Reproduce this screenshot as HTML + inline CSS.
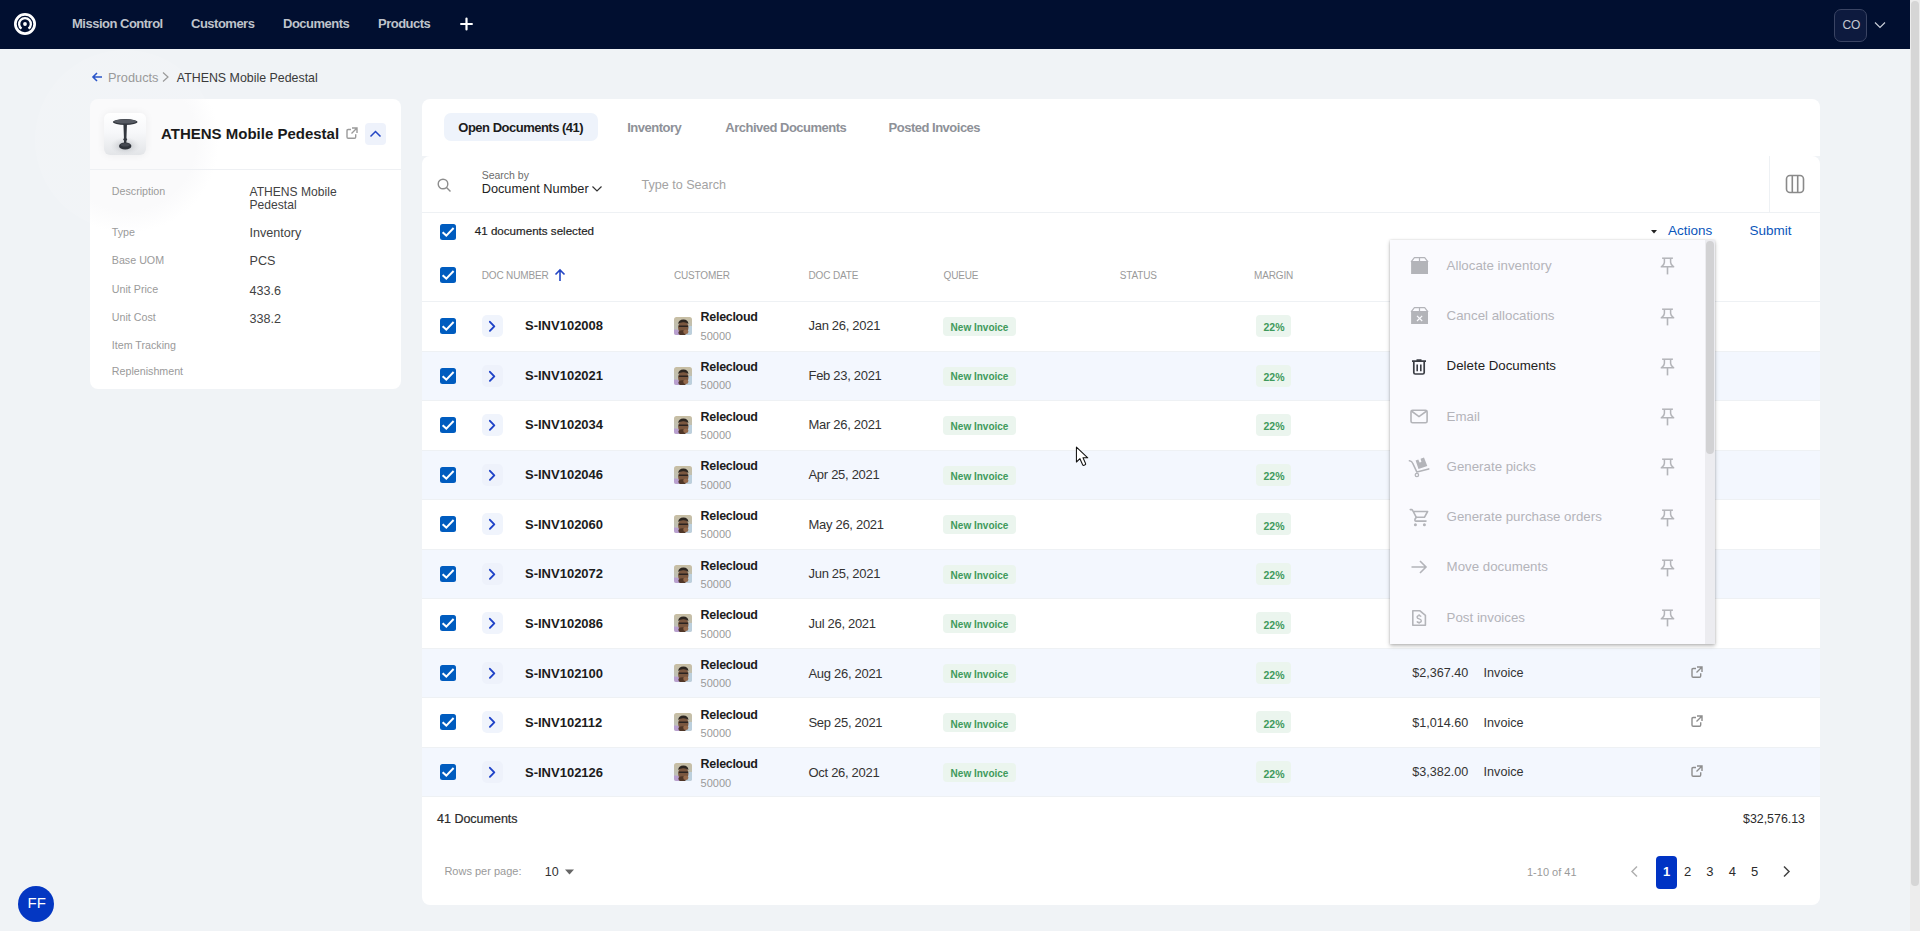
<!DOCTYPE html>
<html><head><meta charset="utf-8"><title>ATHENS Mobile Pedestal</title>
<style>
html,body{margin:0;padding:0;}
body{width:1920px;height:931px;overflow:hidden;position:relative;background:#f0f3f6;font-family:"Liberation Sans",sans-serif;}
.t{position:absolute;white-space:nowrap;}
svg{display:block;}
</style></head><body>
<div style="position:absolute;left:35px;top:50px;width:180px;height:180px;border-radius:50%;background:radial-gradient(circle at 50% 50%, rgba(252,253,253,0.12) 0, rgba(252,253,253,0.12) 70%, rgba(252,253,253,0) 100%);"></div>
<div style="position:absolute;left:0px;top:0px;width:1910px;height:49px;background:#010f30;"></div>
<svg style="position:absolute;left:10px;top:9px;" width="30" height="30" viewBox="0 0 30 30"><circle cx="15" cy="15" r="9.65" fill="none" stroke="#fff" stroke-width="2.7"/><path d="M11.5 19.7 A5.85 5.85 0 1 1 18.5 19.7" fill="none" stroke="#fff" stroke-width="2.3"/><circle cx="15" cy="15" r="1.9" fill="#fff"/></svg>
<div class="t" style="left:72px;top:16.75px;font-size:13px;line-height:13px;color:#bfc3cb;font-weight:700;letter-spacing:-0.5px;">Mission Control</div>
<div class="t" style="left:191px;top:16.75px;font-size:13px;line-height:13px;color:#bfc3cb;font-weight:700;letter-spacing:-0.5px;">Customers</div>
<div class="t" style="left:283px;top:16.75px;font-size:13px;line-height:13px;color:#bfc3cb;font-weight:700;letter-spacing:-0.5px;">Documents</div>
<div class="t" style="left:378px;top:16.75px;font-size:13px;line-height:13px;color:#bfc3cb;font-weight:700;letter-spacing:-0.5px;">Products</div>
<svg style="position:absolute;left:456px;top:14px;" width="20" height="20" viewBox="0 0 20 20"><path d="M5.1 10 H15.9 M10.5 4.6 V15.4" stroke="#fff" stroke-width="2.2" stroke-linecap="round"/></svg>
<div style="position:absolute;left:1834px;top:9px;width:33px;height:33px;box-sizing:border-box;border:1px solid #3a4463;border-radius:7px;background:#0d1a3e;"></div>
<div class="t" style="left:1842.4px;top:18.74px;font-size:12px;line-height:12px;color:#c4c8d2;font-weight:400;">CO</div>
<svg style="position:absolute;left:1874px;top:20.8px;" width="12" height="8" viewBox="0 0 12 8"><path d="M1 1.5 L6 6.5 L11 1.5" fill="none" stroke="#c9ced8" stroke-width="1.2"/></svg>
<div style="position:absolute;left:1910px;top:0px;width:10px;height:931px;background:#ededed;"></div>
<div style="position:absolute;left:1911px;top:1px;width:8px;height:885px;background:#d6d6d6;border-radius:4px;"></div>
<svg style="position:absolute;left:91px;top:71px;" width="12" height="12" viewBox="0 0 12 12"><path d="M11 6 H2 M6 2 L2 6 L6 10" fill="none" stroke="#2a55c9" stroke-width="1.6"/></svg>
<div class="t" style="left:108px;top:71.86px;font-size:12.8px;line-height:12.8px;color:#9a9a9a;font-weight:400;">Products</div>
<svg style="position:absolute;left:161px;top:71px;" width="9" height="12" viewBox="0 0 9 12"><path d="M2 1.5 L7 6 L2 10.5" fill="none" stroke="#9a9a9a" stroke-width="1.2"/></svg>
<div class="t" style="left:176.8px;top:72.00px;font-size:12.4px;line-height:12.4px;color:#3a3a3a;font-weight:400;">ATHENS Mobile Pedestal</div>
<div style="position:absolute;left:90px;top:99px;width:311px;height:290px;background:radial-gradient(circle 92px at 37px 42px, rgba(250,250,251,1) 0, rgba(250,250,251,1) 75%, rgba(255,255,255,1) 100%);border-radius:8px;"></div>
<div style="position:absolute;left:90px;top:169px;width:311px;height:1px;background:#eef0f3;"></div>
<div style="position:absolute;left:104px;top:113px;width:42px;height:42px;border-radius:6px;background:linear-gradient(180deg,#ffffff 0%,#f7f8fa 45%,#e3e5e8 100%);box-shadow:0 0 8px rgba(0,0,0,0.06);"></div>
<svg style="position:absolute;left:104px;top:113px;" width="42" height="42" viewBox="0 0 42 42"><defs><radialGradient id="sh" cx="0.5" cy="0.5" r="0.5"><stop offset="0" stop-color="#a9adb3" stop-opacity="0.9"/><stop offset="1" stop-color="#d8dadd" stop-opacity="0"/></radialGradient></defs><ellipse cx="21.2" cy="33" rx="15" ry="9" fill="url(#sh)"/><ellipse cx="21.2" cy="9" rx="12.3" ry="2.9" fill="#2f333a"/><ellipse cx="21.2" cy="8.4" rx="11.2" ry="2.1" fill="#575b63"/><path d="M19.4 11 L23 11 L22.6 21 Q22.4 25 22.5 26 L19.9 26 Q20 25 19.8 21 Z" fill="#33373e"/><ellipse cx="21.2" cy="26.6" rx="1.9" ry="1.3" fill="#33373e"/><rect x="20" y="27" width="2.4" height="3.5" fill="#33373e"/><ellipse cx="21.2" cy="33" rx="6.2" ry="3.6" fill="#2f333a"/><ellipse cx="21.2" cy="31.8" rx="4.5" ry="1.8" fill="#454951"/></svg>
<div class="t" style="left:161px;top:125.80px;font-size:15px;line-height:15px;color:#1a1a1a;font-weight:700;">ATHENS Mobile Pedestal</div>
<svg style="position:absolute;left:346px;top:127px;" width="12" height="12" viewBox="0 0 12 12"><path d="M5 2.5 H2.2 Q1 2.5 1 3.7 V10 Q1 11.2 2.2 11.2 H8.5 Q9.7 11.2 9.7 10 V7.2" fill="none" stroke="#9b9b9b" stroke-width="1.4"/><path d="M6 1 H11 V6 M11 1 L5.5 6.5" fill="none" stroke="#9b9b9b" stroke-width="1.4"/></svg>
<div style="position:absolute;left:365px;top:123px;width:21px;height:22px;background:#eef2fb;border-radius:4px;"></div>
<svg style="position:absolute;left:369px;top:128px;" width="13" height="12" viewBox="0 0 13 12"><path d="M1.5 8.5 L6.5 3.5 L11.5 8.5" fill="none" stroke="#2446c4" stroke-width="1.5"/></svg>
<div class="t" style="left:111.8px;top:186.04px;font-size:10.7px;line-height:10.7px;color:#9a9a9a;font-weight:400;">Description</div>
<div class="t" style="left:249.5px;top:185.76px;font-size:12.1px;line-height:12.1px;color:#424242;font-weight:400;">ATHENS Mobile</div>
<div class="t" style="left:249.5px;top:198.66px;font-size:12.1px;line-height:12.1px;color:#424242;font-weight:400;">Pedestal</div>
<div class="t" style="left:111.8px;top:226.94px;font-size:10.7px;line-height:10.7px;color:#9a9a9a;font-weight:400;">Type</div>
<div class="t" style="left:249.5px;top:227.33px;font-size:12.6px;line-height:12.6px;color:#424242;font-weight:400;">Inventory</div>
<div class="t" style="left:111.8px;top:254.94px;font-size:10.7px;line-height:10.7px;color:#9a9a9a;font-weight:400;">Base UOM</div>
<div class="t" style="left:249.5px;top:255.33px;font-size:12.6px;line-height:12.6px;color:#424242;font-weight:400;">PCS</div>
<div class="t" style="left:111.8px;top:283.94px;font-size:10.7px;line-height:10.7px;color:#9a9a9a;font-weight:400;">Unit Price</div>
<div class="t" style="left:249.5px;top:285.13px;font-size:12.6px;line-height:12.6px;color:#424242;font-weight:400;">433.6</div>
<div class="t" style="left:111.8px;top:311.84px;font-size:10.7px;line-height:10.7px;color:#9a9a9a;font-weight:400;">Unit Cost</div>
<div class="t" style="left:249.5px;top:312.73px;font-size:12.6px;line-height:12.6px;color:#424242;font-weight:400;">338.2</div>
<div class="t" style="left:111.8px;top:339.84px;font-size:10.7px;line-height:10.7px;color:#9a9a9a;font-weight:400;">Item Tracking</div>
<div class="t" style="left:111.8px;top:365.84px;font-size:10.7px;line-height:10.7px;color:#9a9a9a;font-weight:400;">Replenishment</div>
<div style="position:absolute;left:422px;top:99px;width:1398px;height:57px;background:#fff;border-radius:8px 8px 0 0;"></div>
<div style="position:absolute;left:422px;top:156px;width:1398px;height:749px;background:#fff;border-radius:8px;"></div>
<div style="position:absolute;left:444px;top:113px;width:154px;height:28px;background:#eef3fb;border-radius:7px;"></div>
<div class="t" style="left:458.3px;top:121.20px;font-size:13px;line-height:13px;color:#1c1c1c;font-weight:700;letter-spacing:-0.5px;">Open Documents (41)</div>
<div class="t" style="left:627.2px;top:121.20px;font-size:13px;line-height:13px;color:#8e9198;font-weight:700;letter-spacing:-0.5px;">Inventory</div>
<div class="t" style="left:725.3px;top:121.20px;font-size:13px;line-height:13px;color:#8e9198;font-weight:700;letter-spacing:-0.5px;">Archived Documents</div>
<div class="t" style="left:888.6px;top:121.20px;font-size:13px;line-height:13px;color:#8e9198;font-weight:700;letter-spacing:-0.5px;">Posted Invoices</div>
<svg style="position:absolute;left:437px;top:178px;" width="15" height="15" viewBox="0 0 15 15"><circle cx="6" cy="6" r="4.8" fill="none" stroke="#8d8d8d" stroke-width="1.4"/><path d="M9.5 9.5 L13.5 13.5" stroke="#8d8d8d" stroke-width="1.5"/></svg>
<div class="t" style="left:481.7px;top:169.61px;font-size:10.5px;line-height:10.5px;color:#6b6b6b;font-weight:400;">Search by</div>
<div class="t" style="left:481.7px;top:183.21px;font-size:12.75px;line-height:12.75px;color:#222;font-weight:400;">Document Number</div>
<svg style="position:absolute;left:591px;top:185px;" width="12" height="8" viewBox="0 0 12 8"><path d="M1.5 1.5 L6 6 L10.5 1.5" fill="none" stroke="#333" stroke-width="1.2"/></svg>
<div class="t" style="left:641.4px;top:178.63px;font-size:12.6px;line-height:12.6px;color:#a3a3a3;font-weight:400;">Type to Search</div>
<div style="position:absolute;left:1769px;top:156px;width:1px;height:56px;background:#eef1f4;"></div>
<svg style="position:absolute;left:1785px;top:174px;" width="20" height="20" viewBox="0 0 20 20"><rect x="1.5" y="1.5" width="17" height="17" rx="3.5" fill="none" stroke="#8a8a8a" stroke-width="1.6"/><path d="M7.3 2 V18 M12.7 2 V18" stroke="#8a8a8a" stroke-width="1.6"/></svg>
<div style="position:absolute;left:422px;top:212px;width:1398px;height:1px;background:#eef1f4;"></div>
<svg style="position:absolute;left:440px;top:223.5px;" width="16" height="16" viewBox="0 0 16 16"><rect x="0" y="0" width="16" height="16" rx="2.5" fill="#005cbf"/><path d="M2.6 8.2 L6.3 11.6 L13.6 4" fill="none" stroke="#fff" stroke-width="2"/></svg>
<div class="t" style="left:474.8px;top:225.18px;font-size:11.6px;line-height:11.6px;color:#1f1f1f;font-weight:400;-webkit-text-stroke:0.2px #1f1f1f;">41 documents selected</div>
<svg style="position:absolute;left:1649px;top:228px;" width="10" height="7" viewBox="0 0 10 7"><path d="M2 2 H8 L5 5.5 Z" fill="#222"/></svg>
<div class="t" style="left:1668px;top:223.77px;font-size:13.5px;line-height:13.5px;color:#0b56bb;font-weight:400;">Actions</div>
<div class="t" style="left:1749.4px;top:223.77px;font-size:13.5px;line-height:13.5px;color:#0b56bb;font-weight:400;">Submit</div>
<svg style="position:absolute;left:440px;top:267px;" width="16" height="16" viewBox="0 0 16 16"><rect x="0" y="0" width="16" height="16" rx="2.5" fill="#005cbf"/><path d="M2.6 8.2 L6.3 11.6 L13.6 4" fill="none" stroke="#fff" stroke-width="2"/></svg>
<div class="t" style="left:481.7px;top:270.84px;font-size:10px;line-height:10px;color:#9a9a9a;font-weight:400;letter-spacing:-0.15px;">DOC NUMBER</div>
<svg style="position:absolute;left:553px;top:268px;" width="14" height="14" viewBox="0 0 14 14"><path d="M7 13 V2 M2.5 6.5 L7 2 L11.5 6.5" fill="none" stroke="#2446c4" stroke-width="1.6"/></svg>
<div class="t" style="left:673.9px;top:270.84px;font-size:10px;line-height:10px;color:#9a9a9a;font-weight:400;letter-spacing:-0.15px;">CUSTOMER</div>
<div class="t" style="left:808.5px;top:270.84px;font-size:10px;line-height:10px;color:#9a9a9a;font-weight:400;letter-spacing:-0.15px;">DOC DATE</div>
<div class="t" style="left:943.5px;top:270.84px;font-size:10px;line-height:10px;color:#9a9a9a;font-weight:400;letter-spacing:-0.15px;">QUEUE</div>
<div class="t" style="left:1119.8px;top:270.84px;font-size:10px;line-height:10px;color:#9a9a9a;font-weight:400;letter-spacing:-0.15px;">STATUS</div>
<div class="t" style="left:1254px;top:270.84px;font-size:10px;line-height:10px;color:#9a9a9a;font-weight:400;letter-spacing:-0.15px;">MARGIN</div>
<div style="position:absolute;left:422px;top:301px;width:1398px;height:1px;background:#eef1f4;"></div>
<div style="position:absolute;left:422px;top:350.5px;width:1398px;height:1px;background:#eef1f4;"></div>
<svg style="position:absolute;left:440px;top:318.25px;" width="16" height="16" viewBox="0 0 16 16"><rect x="0" y="0" width="16" height="16" rx="2.5" fill="#005cbf"/><path d="M2.6 8.2 L6.3 11.6 L13.6 4" fill="none" stroke="#fff" stroke-width="2"/></svg>
<div style="position:absolute;left:482px;top:315.45px;width:21px;height:21.6px;background:#f0f4fc;border-radius:5px;"></div>
<svg style="position:absolute;left:486px;top:319.45px;" width="12" height="14" viewBox="0 0 12 14"><path d="M3.9 2.8 L8.3 7.3 L3.9 11.8" fill="none" stroke="#1f43c8" stroke-width="1.9" stroke-linecap="round" stroke-linejoin="round"/></svg>
<div class="t" style="left:525px;top:319.10px;font-size:13px;line-height:13px;color:#1c1c1c;font-weight:700;">S-INV102008</div>
<svg style="position:absolute;left:674px;top:317.25px;" width="18" height="18" viewBox="0 0 18 18"><defs><linearGradient id="avg0" x1="0" y1="0" x2="0" y2="1"><stop offset="0" stop-color="#c8bea3"/><stop offset="0.6" stop-color="#bfc0b4"/><stop offset="1" stop-color="#c4c9cf"/></linearGradient><clipPath id="avc0"><rect width="18" height="18" rx="2.5"/></clipPath></defs><g clip-path="url(#avc0)"><rect width="18" height="18" fill="url(#avg0)"/><rect x="12.5" y="9" width="6" height="9" fill="#bccfdc"/><path d="M0 12.5 Q3 12 5.5 13.5 L7 18 H0 Z" fill="#b9a0cf"/><ellipse cx="9.3" cy="10.6" rx="5.2" ry="6.6" fill="#7a573f"/><path d="M4.2 7 Q4.5 2.6 9.4 2.5 Q14.2 2.6 14.4 7 Q12 5 9.4 5.2 Q6.6 5 4.2 7 Z" fill="#2c2520"/><rect x="4.6" y="8.4" width="9.6" height="1.5" rx="0.6" fill="#2a2320"/><ellipse cx="8.4" cy="15.8" rx="4" ry="2.6" fill="#4f3627"/><ellipse cx="11.8" cy="14.8" rx="2.6" ry="2.2" fill="#94694b"/></g></svg>
<div class="t" style="left:700.6px;top:311.32px;font-size:12.5px;line-height:12.5px;color:#1c1c1c;font-weight:700;letter-spacing:-0.3px;">Relecloud</div>
<div class="t" style="left:700.6px;top:330.79px;font-size:11px;line-height:11px;color:#9a9a9a;font-weight:400;">50000</div>
<div class="t" style="left:808.5px;top:319.10px;font-size:13px;line-height:13px;color:#333;font-weight:400;letter-spacing:-0.3px;">Jan 26, 2021</div>
<div style="position:absolute;left:943px;top:317.05px;width:73px;height:19px;background:#ebf5ee;border-radius:4px;"></div>
<div class="t" style="left:950.6px;top:322.54px;font-size:10px;line-height:10px;color:#3f9a5c;font-weight:700;">New Invoice</div>
<div style="position:absolute;left:1256px;top:315.25px;width:35px;height:22px;background:#ebf5ee;border-radius:4px;"></div>
<div class="t" style="left:1263.5px;top:322.11px;font-size:10.5px;line-height:10.5px;color:#3f9a5c;font-weight:700;">22%</div>
<div class="t" style="right:451.79999999999995px;top:319.43px;font-size:12.6px;line-height:12.6px;color:#333;font-weight:400;">$1,734.40</div>
<div class="t" style="left:1483.6px;top:319.43px;font-size:12.6px;line-height:12.6px;color:#333;font-weight:400;">Invoice</div>
<svg style="position:absolute;left:1691px;top:319.35px;" width="12" height="12" viewBox="0 0 12 12"><path d="M5 2.5 H2.2 Q1 2.5 1 3.7 V10 Q1 11.2 2.2 11.2 H8.5 Q9.7 11.2 9.7 10 V7.2" fill="none" stroke="#8d8d8d" stroke-width="1.4"/><path d="M6 1 H11 V6 M11 1 L5.5 6.5" fill="none" stroke="#8d8d8d" stroke-width="1.4"/></svg>
<div style="position:absolute;left:422px;top:351.5px;width:1398px;height:49.5px;background:#f3f7fe;"></div>
<div style="position:absolute;left:422px;top:400.0px;width:1398px;height:1px;background:#eef1f4;"></div>
<svg style="position:absolute;left:440px;top:367.75px;" width="16" height="16" viewBox="0 0 16 16"><rect x="0" y="0" width="16" height="16" rx="2.5" fill="#005cbf"/><path d="M2.6 8.2 L6.3 11.6 L13.6 4" fill="none" stroke="#fff" stroke-width="2"/></svg>
<div style="position:absolute;left:482px;top:364.95px;width:21px;height:21.6px;background:#eef2fb;border-radius:5px;"></div>
<svg style="position:absolute;left:486px;top:368.95px;" width="12" height="14" viewBox="0 0 12 14"><path d="M3.9 2.8 L8.3 7.3 L3.9 11.8" fill="none" stroke="#1f43c8" stroke-width="1.9" stroke-linecap="round" stroke-linejoin="round"/></svg>
<div class="t" style="left:525px;top:368.76px;font-size:13px;line-height:13px;color:#1c1c1c;font-weight:700;">S-INV102021</div>
<svg style="position:absolute;left:674px;top:366.75px;" width="18" height="18" viewBox="0 0 18 18"><defs><linearGradient id="avg1" x1="0" y1="0" x2="0" y2="1"><stop offset="0" stop-color="#c8bea3"/><stop offset="0.6" stop-color="#bfc0b4"/><stop offset="1" stop-color="#c4c9cf"/></linearGradient><clipPath id="avc1"><rect width="18" height="18" rx="2.5"/></clipPath></defs><g clip-path="url(#avc1)"><rect width="18" height="18" fill="url(#avg1)"/><rect x="12.5" y="9" width="6" height="9" fill="#bccfdc"/><path d="M0 12.5 Q3 12 5.5 13.5 L7 18 H0 Z" fill="#b9a0cf"/><ellipse cx="9.3" cy="10.6" rx="5.2" ry="6.6" fill="#7a573f"/><path d="M4.2 7 Q4.5 2.6 9.4 2.5 Q14.2 2.6 14.4 7 Q12 5 9.4 5.2 Q6.6 5 4.2 7 Z" fill="#2c2520"/><rect x="4.6" y="8.4" width="9.6" height="1.5" rx="0.6" fill="#2a2320"/><ellipse cx="8.4" cy="15.8" rx="4" ry="2.6" fill="#4f3627"/><ellipse cx="11.8" cy="14.8" rx="2.6" ry="2.2" fill="#94694b"/></g></svg>
<div class="t" style="left:700.6px;top:360.98px;font-size:12.5px;line-height:12.5px;color:#1c1c1c;font-weight:700;letter-spacing:-0.3px;">Relecloud</div>
<div class="t" style="left:700.6px;top:380.45px;font-size:11px;line-height:11px;color:#9a9a9a;font-weight:400;">50000</div>
<div class="t" style="left:808.5px;top:368.76px;font-size:13px;line-height:13px;color:#333;font-weight:400;letter-spacing:-0.3px;">Feb 23, 2021</div>
<div style="position:absolute;left:943px;top:366.55px;width:73px;height:19px;background:#ebf5ee;border-radius:4px;"></div>
<div class="t" style="left:950.6px;top:372.19px;font-size:10px;line-height:10px;color:#3f9a5c;font-weight:700;">New Invoice</div>
<div style="position:absolute;left:1256px;top:364.75px;width:35px;height:22px;background:#ebf5ee;border-radius:4px;"></div>
<div class="t" style="left:1263.5px;top:371.77px;font-size:10.5px;line-height:10.5px;color:#3f9a5c;font-weight:700;">22%</div>
<div class="t" style="right:451.79999999999995px;top:369.09px;font-size:12.6px;line-height:12.6px;color:#333;font-weight:400;">$3,469.80</div>
<div class="t" style="left:1483.6px;top:369.09px;font-size:12.6px;line-height:12.6px;color:#333;font-weight:400;">Invoice</div>
<svg style="position:absolute;left:1691px;top:368.85px;" width="12" height="12" viewBox="0 0 12 12"><path d="M5 2.5 H2.2 Q1 2.5 1 3.7 V10 Q1 11.2 2.2 11.2 H8.5 Q9.7 11.2 9.7 10 V7.2" fill="none" stroke="#8d8d8d" stroke-width="1.4"/><path d="M6 1 H11 V6 M11 1 L5.5 6.5" fill="none" stroke="#8d8d8d" stroke-width="1.4"/></svg>
<div style="position:absolute;left:422px;top:449.5px;width:1398px;height:1px;background:#eef1f4;"></div>
<svg style="position:absolute;left:440px;top:417.25px;" width="16" height="16" viewBox="0 0 16 16"><rect x="0" y="0" width="16" height="16" rx="2.5" fill="#005cbf"/><path d="M2.6 8.2 L6.3 11.6 L13.6 4" fill="none" stroke="#fff" stroke-width="2"/></svg>
<div style="position:absolute;left:482px;top:414.45px;width:21px;height:21.6px;background:#f0f4fc;border-radius:5px;"></div>
<svg style="position:absolute;left:486px;top:418.45px;" width="12" height="14" viewBox="0 0 12 14"><path d="M3.9 2.8 L8.3 7.3 L3.9 11.8" fill="none" stroke="#1f43c8" stroke-width="1.9" stroke-linecap="round" stroke-linejoin="round"/></svg>
<div class="t" style="left:525px;top:418.42px;font-size:13px;line-height:13px;color:#1c1c1c;font-weight:700;">S-INV102034</div>
<svg style="position:absolute;left:674px;top:416.25px;" width="18" height="18" viewBox="0 0 18 18"><defs><linearGradient id="avg2" x1="0" y1="0" x2="0" y2="1"><stop offset="0" stop-color="#c8bea3"/><stop offset="0.6" stop-color="#bfc0b4"/><stop offset="1" stop-color="#c4c9cf"/></linearGradient><clipPath id="avc2"><rect width="18" height="18" rx="2.5"/></clipPath></defs><g clip-path="url(#avc2)"><rect width="18" height="18" fill="url(#avg2)"/><rect x="12.5" y="9" width="6" height="9" fill="#bccfdc"/><path d="M0 12.5 Q3 12 5.5 13.5 L7 18 H0 Z" fill="#b9a0cf"/><ellipse cx="9.3" cy="10.6" rx="5.2" ry="6.6" fill="#7a573f"/><path d="M4.2 7 Q4.5 2.6 9.4 2.5 Q14.2 2.6 14.4 7 Q12 5 9.4 5.2 Q6.6 5 4.2 7 Z" fill="#2c2520"/><rect x="4.6" y="8.4" width="9.6" height="1.5" rx="0.6" fill="#2a2320"/><ellipse cx="8.4" cy="15.8" rx="4" ry="2.6" fill="#4f3627"/><ellipse cx="11.8" cy="14.8" rx="2.6" ry="2.2" fill="#94694b"/></g></svg>
<div class="t" style="left:700.6px;top:410.64px;font-size:12.5px;line-height:12.5px;color:#1c1c1c;font-weight:700;letter-spacing:-0.3px;">Relecloud</div>
<div class="t" style="left:700.6px;top:430.11px;font-size:11px;line-height:11px;color:#9a9a9a;font-weight:400;">50000</div>
<div class="t" style="left:808.5px;top:418.42px;font-size:13px;line-height:13px;color:#333;font-weight:400;letter-spacing:-0.3px;">Mar 26, 2021</div>
<div style="position:absolute;left:943px;top:416.05px;width:73px;height:19px;background:#ebf5ee;border-radius:4px;"></div>
<div class="t" style="left:950.6px;top:421.86px;font-size:10px;line-height:10px;color:#3f9a5c;font-weight:700;">New Invoice</div>
<div style="position:absolute;left:1256px;top:414.25px;width:35px;height:22px;background:#ebf5ee;border-radius:4px;"></div>
<div class="t" style="left:1263.5px;top:421.43px;font-size:10.5px;line-height:10.5px;color:#3f9a5c;font-weight:700;">22%</div>
<div class="t" style="right:451.79999999999995px;top:418.75px;font-size:12.6px;line-height:12.6px;color:#333;font-weight:400;">$2,168.00</div>
<div class="t" style="left:1483.6px;top:418.75px;font-size:12.6px;line-height:12.6px;color:#333;font-weight:400;">Invoice</div>
<svg style="position:absolute;left:1691px;top:418.35px;" width="12" height="12" viewBox="0 0 12 12"><path d="M5 2.5 H2.2 Q1 2.5 1 3.7 V10 Q1 11.2 2.2 11.2 H8.5 Q9.7 11.2 9.7 10 V7.2" fill="none" stroke="#8d8d8d" stroke-width="1.4"/><path d="M6 1 H11 V6 M11 1 L5.5 6.5" fill="none" stroke="#8d8d8d" stroke-width="1.4"/></svg>
<div style="position:absolute;left:422px;top:450.5px;width:1398px;height:49.5px;background:#f3f7fe;"></div>
<div style="position:absolute;left:422px;top:499.0px;width:1398px;height:1px;background:#eef1f4;"></div>
<svg style="position:absolute;left:440px;top:466.75px;" width="16" height="16" viewBox="0 0 16 16"><rect x="0" y="0" width="16" height="16" rx="2.5" fill="#005cbf"/><path d="M2.6 8.2 L6.3 11.6 L13.6 4" fill="none" stroke="#fff" stroke-width="2"/></svg>
<div style="position:absolute;left:482px;top:463.95px;width:21px;height:21.6px;background:#eef2fb;border-radius:5px;"></div>
<svg style="position:absolute;left:486px;top:467.95px;" width="12" height="14" viewBox="0 0 12 14"><path d="M3.9 2.8 L8.3 7.3 L3.9 11.8" fill="none" stroke="#1f43c8" stroke-width="1.9" stroke-linecap="round" stroke-linejoin="round"/></svg>
<div class="t" style="left:525px;top:468.08px;font-size:13px;line-height:13px;color:#1c1c1c;font-weight:700;">S-INV102046</div>
<svg style="position:absolute;left:674px;top:465.75px;" width="18" height="18" viewBox="0 0 18 18"><defs><linearGradient id="avg3" x1="0" y1="0" x2="0" y2="1"><stop offset="0" stop-color="#c8bea3"/><stop offset="0.6" stop-color="#bfc0b4"/><stop offset="1" stop-color="#c4c9cf"/></linearGradient><clipPath id="avc3"><rect width="18" height="18" rx="2.5"/></clipPath></defs><g clip-path="url(#avc3)"><rect width="18" height="18" fill="url(#avg3)"/><rect x="12.5" y="9" width="6" height="9" fill="#bccfdc"/><path d="M0 12.5 Q3 12 5.5 13.5 L7 18 H0 Z" fill="#b9a0cf"/><ellipse cx="9.3" cy="10.6" rx="5.2" ry="6.6" fill="#7a573f"/><path d="M4.2 7 Q4.5 2.6 9.4 2.5 Q14.2 2.6 14.4 7 Q12 5 9.4 5.2 Q6.6 5 4.2 7 Z" fill="#2c2520"/><rect x="4.6" y="8.4" width="9.6" height="1.5" rx="0.6" fill="#2a2320"/><ellipse cx="8.4" cy="15.8" rx="4" ry="2.6" fill="#4f3627"/><ellipse cx="11.8" cy="14.8" rx="2.6" ry="2.2" fill="#94694b"/></g></svg>
<div class="t" style="left:700.6px;top:460.30px;font-size:12.5px;line-height:12.5px;color:#1c1c1c;font-weight:700;letter-spacing:-0.3px;">Relecloud</div>
<div class="t" style="left:700.6px;top:479.77px;font-size:11px;line-height:11px;color:#9a9a9a;font-weight:400;">50000</div>
<div class="t" style="left:808.5px;top:468.08px;font-size:13px;line-height:13px;color:#333;font-weight:400;letter-spacing:-0.3px;">Apr 25, 2021</div>
<div style="position:absolute;left:943px;top:465.55px;width:73px;height:19px;background:#ebf5ee;border-radius:4px;"></div>
<div class="t" style="left:950.6px;top:471.52px;font-size:10px;line-height:10px;color:#3f9a5c;font-weight:700;">New Invoice</div>
<div style="position:absolute;left:1256px;top:463.75px;width:35px;height:22px;background:#ebf5ee;border-radius:4px;"></div>
<div class="t" style="left:1263.5px;top:471.09px;font-size:10.5px;line-height:10.5px;color:#3f9a5c;font-weight:700;">22%</div>
<div class="t" style="right:451.79999999999995px;top:468.41px;font-size:12.6px;line-height:12.6px;color:#333;font-weight:400;">$4,336.00</div>
<div class="t" style="left:1483.6px;top:468.41px;font-size:12.6px;line-height:12.6px;color:#333;font-weight:400;">Invoice</div>
<svg style="position:absolute;left:1691px;top:467.85px;" width="12" height="12" viewBox="0 0 12 12"><path d="M5 2.5 H2.2 Q1 2.5 1 3.7 V10 Q1 11.2 2.2 11.2 H8.5 Q9.7 11.2 9.7 10 V7.2" fill="none" stroke="#8d8d8d" stroke-width="1.4"/><path d="M6 1 H11 V6 M11 1 L5.5 6.5" fill="none" stroke="#8d8d8d" stroke-width="1.4"/></svg>
<div style="position:absolute;left:422px;top:548.5px;width:1398px;height:1px;background:#eef1f4;"></div>
<svg style="position:absolute;left:440px;top:516.25px;" width="16" height="16" viewBox="0 0 16 16"><rect x="0" y="0" width="16" height="16" rx="2.5" fill="#005cbf"/><path d="M2.6 8.2 L6.3 11.6 L13.6 4" fill="none" stroke="#fff" stroke-width="2"/></svg>
<div style="position:absolute;left:482px;top:513.45px;width:21px;height:21.6px;background:#f0f4fc;border-radius:5px;"></div>
<svg style="position:absolute;left:486px;top:517.45px;" width="12" height="14" viewBox="0 0 12 14"><path d="M3.9 2.8 L8.3 7.3 L3.9 11.8" fill="none" stroke="#1f43c8" stroke-width="1.9" stroke-linecap="round" stroke-linejoin="round"/></svg>
<div class="t" style="left:525px;top:517.74px;font-size:13px;line-height:13px;color:#1c1c1c;font-weight:700;">S-INV102060</div>
<svg style="position:absolute;left:674px;top:515.25px;" width="18" height="18" viewBox="0 0 18 18"><defs><linearGradient id="avg4" x1="0" y1="0" x2="0" y2="1"><stop offset="0" stop-color="#c8bea3"/><stop offset="0.6" stop-color="#bfc0b4"/><stop offset="1" stop-color="#c4c9cf"/></linearGradient><clipPath id="avc4"><rect width="18" height="18" rx="2.5"/></clipPath></defs><g clip-path="url(#avc4)"><rect width="18" height="18" fill="url(#avg4)"/><rect x="12.5" y="9" width="6" height="9" fill="#bccfdc"/><path d="M0 12.5 Q3 12 5.5 13.5 L7 18 H0 Z" fill="#b9a0cf"/><ellipse cx="9.3" cy="10.6" rx="5.2" ry="6.6" fill="#7a573f"/><path d="M4.2 7 Q4.5 2.6 9.4 2.5 Q14.2 2.6 14.4 7 Q12 5 9.4 5.2 Q6.6 5 4.2 7 Z" fill="#2c2520"/><rect x="4.6" y="8.4" width="9.6" height="1.5" rx="0.6" fill="#2a2320"/><ellipse cx="8.4" cy="15.8" rx="4" ry="2.6" fill="#4f3627"/><ellipse cx="11.8" cy="14.8" rx="2.6" ry="2.2" fill="#94694b"/></g></svg>
<div class="t" style="left:700.6px;top:509.96px;font-size:12.5px;line-height:12.5px;color:#1c1c1c;font-weight:700;letter-spacing:-0.3px;">Relecloud</div>
<div class="t" style="left:700.6px;top:529.43px;font-size:11px;line-height:11px;color:#9a9a9a;font-weight:400;">50000</div>
<div class="t" style="left:808.5px;top:517.74px;font-size:13px;line-height:13px;color:#333;font-weight:400;letter-spacing:-0.3px;">May 26, 2021</div>
<div style="position:absolute;left:943px;top:515.05px;width:73px;height:19px;background:#ebf5ee;border-radius:4px;"></div>
<div class="t" style="left:950.6px;top:521.17px;font-size:10px;line-height:10px;color:#3f9a5c;font-weight:700;">New Invoice</div>
<div style="position:absolute;left:1256px;top:513.25px;width:35px;height:22px;background:#ebf5ee;border-radius:4px;"></div>
<div class="t" style="left:1263.5px;top:520.75px;font-size:10.5px;line-height:10.5px;color:#3f9a5c;font-weight:700;">22%</div>
<div class="t" style="right:451.79999999999995px;top:518.07px;font-size:12.6px;line-height:12.6px;color:#333;font-weight:400;">$3,035.20</div>
<div class="t" style="left:1483.6px;top:518.07px;font-size:12.6px;line-height:12.6px;color:#333;font-weight:400;">Invoice</div>
<svg style="position:absolute;left:1691px;top:517.35px;" width="12" height="12" viewBox="0 0 12 12"><path d="M5 2.5 H2.2 Q1 2.5 1 3.7 V10 Q1 11.2 2.2 11.2 H8.5 Q9.7 11.2 9.7 10 V7.2" fill="none" stroke="#8d8d8d" stroke-width="1.4"/><path d="M6 1 H11 V6 M11 1 L5.5 6.5" fill="none" stroke="#8d8d8d" stroke-width="1.4"/></svg>
<div style="position:absolute;left:422px;top:549.5px;width:1398px;height:49.5px;background:#f3f7fe;"></div>
<div style="position:absolute;left:422px;top:598.0px;width:1398px;height:1px;background:#eef1f4;"></div>
<svg style="position:absolute;left:440px;top:565.75px;" width="16" height="16" viewBox="0 0 16 16"><rect x="0" y="0" width="16" height="16" rx="2.5" fill="#005cbf"/><path d="M2.6 8.2 L6.3 11.6 L13.6 4" fill="none" stroke="#fff" stroke-width="2"/></svg>
<div style="position:absolute;left:482px;top:562.95px;width:21px;height:21.6px;background:#eef2fb;border-radius:5px;"></div>
<svg style="position:absolute;left:486px;top:566.95px;" width="12" height="14" viewBox="0 0 12 14"><path d="M3.9 2.8 L8.3 7.3 L3.9 11.8" fill="none" stroke="#1f43c8" stroke-width="1.9" stroke-linecap="round" stroke-linejoin="round"/></svg>
<div class="t" style="left:525px;top:567.40px;font-size:13px;line-height:13px;color:#1c1c1c;font-weight:700;">S-INV102072</div>
<svg style="position:absolute;left:674px;top:564.75px;" width="18" height="18" viewBox="0 0 18 18"><defs><linearGradient id="avg5" x1="0" y1="0" x2="0" y2="1"><stop offset="0" stop-color="#c8bea3"/><stop offset="0.6" stop-color="#bfc0b4"/><stop offset="1" stop-color="#c4c9cf"/></linearGradient><clipPath id="avc5"><rect width="18" height="18" rx="2.5"/></clipPath></defs><g clip-path="url(#avc5)"><rect width="18" height="18" fill="url(#avg5)"/><rect x="12.5" y="9" width="6" height="9" fill="#bccfdc"/><path d="M0 12.5 Q3 12 5.5 13.5 L7 18 H0 Z" fill="#b9a0cf"/><ellipse cx="9.3" cy="10.6" rx="5.2" ry="6.6" fill="#7a573f"/><path d="M4.2 7 Q4.5 2.6 9.4 2.5 Q14.2 2.6 14.4 7 Q12 5 9.4 5.2 Q6.6 5 4.2 7 Z" fill="#2c2520"/><rect x="4.6" y="8.4" width="9.6" height="1.5" rx="0.6" fill="#2a2320"/><ellipse cx="8.4" cy="15.8" rx="4" ry="2.6" fill="#4f3627"/><ellipse cx="11.8" cy="14.8" rx="2.6" ry="2.2" fill="#94694b"/></g></svg>
<div class="t" style="left:700.6px;top:559.62px;font-size:12.5px;line-height:12.5px;color:#1c1c1c;font-weight:700;letter-spacing:-0.3px;">Relecloud</div>
<div class="t" style="left:700.6px;top:579.09px;font-size:11px;line-height:11px;color:#9a9a9a;font-weight:400;">50000</div>
<div class="t" style="left:808.5px;top:567.40px;font-size:13px;line-height:13px;color:#333;font-weight:400;letter-spacing:-0.3px;">Jun 25, 2021</div>
<div style="position:absolute;left:943px;top:564.55px;width:73px;height:19px;background:#ebf5ee;border-radius:4px;"></div>
<div class="t" style="left:950.6px;top:570.83px;font-size:10px;line-height:10px;color:#3f9a5c;font-weight:700;">New Invoice</div>
<div style="position:absolute;left:1256px;top:562.75px;width:35px;height:22px;background:#ebf5ee;border-radius:4px;"></div>
<div class="t" style="left:1263.5px;top:570.41px;font-size:10.5px;line-height:10.5px;color:#3f9a5c;font-weight:700;">22%</div>
<div class="t" style="right:451.79999999999995px;top:567.73px;font-size:12.6px;line-height:12.6px;color:#333;font-weight:400;">$2,601.60</div>
<div class="t" style="left:1483.6px;top:567.73px;font-size:12.6px;line-height:12.6px;color:#333;font-weight:400;">Invoice</div>
<svg style="position:absolute;left:1691px;top:566.85px;" width="12" height="12" viewBox="0 0 12 12"><path d="M5 2.5 H2.2 Q1 2.5 1 3.7 V10 Q1 11.2 2.2 11.2 H8.5 Q9.7 11.2 9.7 10 V7.2" fill="none" stroke="#8d8d8d" stroke-width="1.4"/><path d="M6 1 H11 V6 M11 1 L5.5 6.5" fill="none" stroke="#8d8d8d" stroke-width="1.4"/></svg>
<div style="position:absolute;left:422px;top:647.5px;width:1398px;height:1px;background:#eef1f4;"></div>
<svg style="position:absolute;left:440px;top:615.25px;" width="16" height="16" viewBox="0 0 16 16"><rect x="0" y="0" width="16" height="16" rx="2.5" fill="#005cbf"/><path d="M2.6 8.2 L6.3 11.6 L13.6 4" fill="none" stroke="#fff" stroke-width="2"/></svg>
<div style="position:absolute;left:482px;top:612.45px;width:21px;height:21.6px;background:#f0f4fc;border-radius:5px;"></div>
<svg style="position:absolute;left:486px;top:616.45px;" width="12" height="14" viewBox="0 0 12 14"><path d="M3.9 2.8 L8.3 7.3 L3.9 11.8" fill="none" stroke="#1f43c8" stroke-width="1.9" stroke-linecap="round" stroke-linejoin="round"/></svg>
<div class="t" style="left:525px;top:617.06px;font-size:13px;line-height:13px;color:#1c1c1c;font-weight:700;">S-INV102086</div>
<svg style="position:absolute;left:674px;top:614.25px;" width="18" height="18" viewBox="0 0 18 18"><defs><linearGradient id="avg6" x1="0" y1="0" x2="0" y2="1"><stop offset="0" stop-color="#c8bea3"/><stop offset="0.6" stop-color="#bfc0b4"/><stop offset="1" stop-color="#c4c9cf"/></linearGradient><clipPath id="avc6"><rect width="18" height="18" rx="2.5"/></clipPath></defs><g clip-path="url(#avc6)"><rect width="18" height="18" fill="url(#avg6)"/><rect x="12.5" y="9" width="6" height="9" fill="#bccfdc"/><path d="M0 12.5 Q3 12 5.5 13.5 L7 18 H0 Z" fill="#b9a0cf"/><ellipse cx="9.3" cy="10.6" rx="5.2" ry="6.6" fill="#7a573f"/><path d="M4.2 7 Q4.5 2.6 9.4 2.5 Q14.2 2.6 14.4 7 Q12 5 9.4 5.2 Q6.6 5 4.2 7 Z" fill="#2c2520"/><rect x="4.6" y="8.4" width="9.6" height="1.5" rx="0.6" fill="#2a2320"/><ellipse cx="8.4" cy="15.8" rx="4" ry="2.6" fill="#4f3627"/><ellipse cx="11.8" cy="14.8" rx="2.6" ry="2.2" fill="#94694b"/></g></svg>
<div class="t" style="left:700.6px;top:609.28px;font-size:12.5px;line-height:12.5px;color:#1c1c1c;font-weight:700;letter-spacing:-0.3px;">Relecloud</div>
<div class="t" style="left:700.6px;top:628.75px;font-size:11px;line-height:11px;color:#9a9a9a;font-weight:400;">50000</div>
<div class="t" style="left:808.5px;top:617.06px;font-size:13px;line-height:13px;color:#333;font-weight:400;letter-spacing:-0.3px;">Jul 26, 2021</div>
<div style="position:absolute;left:943px;top:614.05px;width:73px;height:19px;background:#ebf5ee;border-radius:4px;"></div>
<div class="t" style="left:950.6px;top:620.49px;font-size:10px;line-height:10px;color:#3f9a5c;font-weight:700;">New Invoice</div>
<div style="position:absolute;left:1256px;top:612.25px;width:35px;height:22px;background:#ebf5ee;border-radius:4px;"></div>
<div class="t" style="left:1263.5px;top:620.07px;font-size:10.5px;line-height:10.5px;color:#3f9a5c;font-weight:700;">22%</div>
<div class="t" style="right:451.79999999999995px;top:617.39px;font-size:12.6px;line-height:12.6px;color:#333;font-weight:400;">$1,300.80</div>
<div class="t" style="left:1483.6px;top:617.39px;font-size:12.6px;line-height:12.6px;color:#333;font-weight:400;">Invoice</div>
<svg style="position:absolute;left:1691px;top:616.35px;" width="12" height="12" viewBox="0 0 12 12"><path d="M5 2.5 H2.2 Q1 2.5 1 3.7 V10 Q1 11.2 2.2 11.2 H8.5 Q9.7 11.2 9.7 10 V7.2" fill="none" stroke="#8d8d8d" stroke-width="1.4"/><path d="M6 1 H11 V6 M11 1 L5.5 6.5" fill="none" stroke="#8d8d8d" stroke-width="1.4"/></svg>
<div style="position:absolute;left:422px;top:648.5px;width:1398px;height:49.5px;background:#f3f7fe;"></div>
<div style="position:absolute;left:422px;top:697.0px;width:1398px;height:1px;background:#eef1f4;"></div>
<svg style="position:absolute;left:440px;top:664.75px;" width="16" height="16" viewBox="0 0 16 16"><rect x="0" y="0" width="16" height="16" rx="2.5" fill="#005cbf"/><path d="M2.6 8.2 L6.3 11.6 L13.6 4" fill="none" stroke="#fff" stroke-width="2"/></svg>
<div style="position:absolute;left:482px;top:661.95px;width:21px;height:21.6px;background:#eef2fb;border-radius:5px;"></div>
<svg style="position:absolute;left:486px;top:665.95px;" width="12" height="14" viewBox="0 0 12 14"><path d="M3.9 2.8 L8.3 7.3 L3.9 11.8" fill="none" stroke="#1f43c8" stroke-width="1.9" stroke-linecap="round" stroke-linejoin="round"/></svg>
<div class="t" style="left:525px;top:666.72px;font-size:13px;line-height:13px;color:#1c1c1c;font-weight:700;">S-INV102100</div>
<svg style="position:absolute;left:674px;top:663.75px;" width="18" height="18" viewBox="0 0 18 18"><defs><linearGradient id="avg7" x1="0" y1="0" x2="0" y2="1"><stop offset="0" stop-color="#c8bea3"/><stop offset="0.6" stop-color="#bfc0b4"/><stop offset="1" stop-color="#c4c9cf"/></linearGradient><clipPath id="avc7"><rect width="18" height="18" rx="2.5"/></clipPath></defs><g clip-path="url(#avc7)"><rect width="18" height="18" fill="url(#avg7)"/><rect x="12.5" y="9" width="6" height="9" fill="#bccfdc"/><path d="M0 12.5 Q3 12 5.5 13.5 L7 18 H0 Z" fill="#b9a0cf"/><ellipse cx="9.3" cy="10.6" rx="5.2" ry="6.6" fill="#7a573f"/><path d="M4.2 7 Q4.5 2.6 9.4 2.5 Q14.2 2.6 14.4 7 Q12 5 9.4 5.2 Q6.6 5 4.2 7 Z" fill="#2c2520"/><rect x="4.6" y="8.4" width="9.6" height="1.5" rx="0.6" fill="#2a2320"/><ellipse cx="8.4" cy="15.8" rx="4" ry="2.6" fill="#4f3627"/><ellipse cx="11.8" cy="14.8" rx="2.6" ry="2.2" fill="#94694b"/></g></svg>
<div class="t" style="left:700.6px;top:658.94px;font-size:12.5px;line-height:12.5px;color:#1c1c1c;font-weight:700;letter-spacing:-0.3px;">Relecloud</div>
<div class="t" style="left:700.6px;top:678.41px;font-size:11px;line-height:11px;color:#9a9a9a;font-weight:400;">50000</div>
<div class="t" style="left:808.5px;top:666.72px;font-size:13px;line-height:13px;color:#333;font-weight:400;letter-spacing:-0.3px;">Aug 26, 2021</div>
<div style="position:absolute;left:943px;top:663.55px;width:73px;height:19px;background:#ebf5ee;border-radius:4px;"></div>
<div class="t" style="left:950.6px;top:670.15px;font-size:10px;line-height:10px;color:#3f9a5c;font-weight:700;">New Invoice</div>
<div style="position:absolute;left:1256px;top:661.75px;width:35px;height:22px;background:#ebf5ee;border-radius:4px;"></div>
<div class="t" style="left:1263.5px;top:669.73px;font-size:10.5px;line-height:10.5px;color:#3f9a5c;font-weight:700;">22%</div>
<div class="t" style="right:451.79999999999995px;top:667.05px;font-size:12.6px;line-height:12.6px;color:#333;font-weight:400;">$2,367.40</div>
<div class="t" style="left:1483.6px;top:667.05px;font-size:12.6px;line-height:12.6px;color:#333;font-weight:400;">Invoice</div>
<svg style="position:absolute;left:1691px;top:665.85px;" width="12" height="12" viewBox="0 0 12 12"><path d="M5 2.5 H2.2 Q1 2.5 1 3.7 V10 Q1 11.2 2.2 11.2 H8.5 Q9.7 11.2 9.7 10 V7.2" fill="none" stroke="#8d8d8d" stroke-width="1.4"/><path d="M6 1 H11 V6 M11 1 L5.5 6.5" fill="none" stroke="#8d8d8d" stroke-width="1.4"/></svg>
<div style="position:absolute;left:422px;top:746.5px;width:1398px;height:1px;background:#eef1f4;"></div>
<svg style="position:absolute;left:440px;top:714.25px;" width="16" height="16" viewBox="0 0 16 16"><rect x="0" y="0" width="16" height="16" rx="2.5" fill="#005cbf"/><path d="M2.6 8.2 L6.3 11.6 L13.6 4" fill="none" stroke="#fff" stroke-width="2"/></svg>
<div style="position:absolute;left:482px;top:711.45px;width:21px;height:21.6px;background:#f0f4fc;border-radius:5px;"></div>
<svg style="position:absolute;left:486px;top:715.45px;" width="12" height="14" viewBox="0 0 12 14"><path d="M3.9 2.8 L8.3 7.3 L3.9 11.8" fill="none" stroke="#1f43c8" stroke-width="1.9" stroke-linecap="round" stroke-linejoin="round"/></svg>
<div class="t" style="left:525px;top:716.38px;font-size:13px;line-height:13px;color:#1c1c1c;font-weight:700;">S-INV102112</div>
<svg style="position:absolute;left:674px;top:713.25px;" width="18" height="18" viewBox="0 0 18 18"><defs><linearGradient id="avg8" x1="0" y1="0" x2="0" y2="1"><stop offset="0" stop-color="#c8bea3"/><stop offset="0.6" stop-color="#bfc0b4"/><stop offset="1" stop-color="#c4c9cf"/></linearGradient><clipPath id="avc8"><rect width="18" height="18" rx="2.5"/></clipPath></defs><g clip-path="url(#avc8)"><rect width="18" height="18" fill="url(#avg8)"/><rect x="12.5" y="9" width="6" height="9" fill="#bccfdc"/><path d="M0 12.5 Q3 12 5.5 13.5 L7 18 H0 Z" fill="#b9a0cf"/><ellipse cx="9.3" cy="10.6" rx="5.2" ry="6.6" fill="#7a573f"/><path d="M4.2 7 Q4.5 2.6 9.4 2.5 Q14.2 2.6 14.4 7 Q12 5 9.4 5.2 Q6.6 5 4.2 7 Z" fill="#2c2520"/><rect x="4.6" y="8.4" width="9.6" height="1.5" rx="0.6" fill="#2a2320"/><ellipse cx="8.4" cy="15.8" rx="4" ry="2.6" fill="#4f3627"/><ellipse cx="11.8" cy="14.8" rx="2.6" ry="2.2" fill="#94694b"/></g></svg>
<div class="t" style="left:700.6px;top:708.60px;font-size:12.5px;line-height:12.5px;color:#1c1c1c;font-weight:700;letter-spacing:-0.3px;">Relecloud</div>
<div class="t" style="left:700.6px;top:728.07px;font-size:11px;line-height:11px;color:#9a9a9a;font-weight:400;">50000</div>
<div class="t" style="left:808.5px;top:716.38px;font-size:13px;line-height:13px;color:#333;font-weight:400;letter-spacing:-0.3px;">Sep 25, 2021</div>
<div style="position:absolute;left:943px;top:713.05px;width:73px;height:19px;background:#ebf5ee;border-radius:4px;"></div>
<div class="t" style="left:950.6px;top:719.81px;font-size:10px;line-height:10px;color:#3f9a5c;font-weight:700;">New Invoice</div>
<div style="position:absolute;left:1256px;top:711.25px;width:35px;height:22px;background:#ebf5ee;border-radius:4px;"></div>
<div class="t" style="left:1263.5px;top:719.39px;font-size:10.5px;line-height:10.5px;color:#3f9a5c;font-weight:700;">22%</div>
<div class="t" style="right:451.79999999999995px;top:716.71px;font-size:12.6px;line-height:12.6px;color:#333;font-weight:400;">$1,014.60</div>
<div class="t" style="left:1483.6px;top:716.71px;font-size:12.6px;line-height:12.6px;color:#333;font-weight:400;">Invoice</div>
<svg style="position:absolute;left:1691px;top:715.35px;" width="12" height="12" viewBox="0 0 12 12"><path d="M5 2.5 H2.2 Q1 2.5 1 3.7 V10 Q1 11.2 2.2 11.2 H8.5 Q9.7 11.2 9.7 10 V7.2" fill="none" stroke="#8d8d8d" stroke-width="1.4"/><path d="M6 1 H11 V6 M11 1 L5.5 6.5" fill="none" stroke="#8d8d8d" stroke-width="1.4"/></svg>
<div style="position:absolute;left:422px;top:747.5px;width:1398px;height:49.5px;background:#f3f7fe;"></div>
<div style="position:absolute;left:422px;top:796.0px;width:1398px;height:1px;background:#eef1f4;"></div>
<svg style="position:absolute;left:440px;top:763.75px;" width="16" height="16" viewBox="0 0 16 16"><rect x="0" y="0" width="16" height="16" rx="2.5" fill="#005cbf"/><path d="M2.6 8.2 L6.3 11.6 L13.6 4" fill="none" stroke="#fff" stroke-width="2"/></svg>
<div style="position:absolute;left:482px;top:760.95px;width:21px;height:21.6px;background:#eef2fb;border-radius:5px;"></div>
<svg style="position:absolute;left:486px;top:764.95px;" width="12" height="14" viewBox="0 0 12 14"><path d="M3.9 2.8 L8.3 7.3 L3.9 11.8" fill="none" stroke="#1f43c8" stroke-width="1.9" stroke-linecap="round" stroke-linejoin="round"/></svg>
<div class="t" style="left:525px;top:766.04px;font-size:13px;line-height:13px;color:#1c1c1c;font-weight:700;">S-INV102126</div>
<svg style="position:absolute;left:674px;top:762.75px;" width="18" height="18" viewBox="0 0 18 18"><defs><linearGradient id="avg9" x1="0" y1="0" x2="0" y2="1"><stop offset="0" stop-color="#c8bea3"/><stop offset="0.6" stop-color="#bfc0b4"/><stop offset="1" stop-color="#c4c9cf"/></linearGradient><clipPath id="avc9"><rect width="18" height="18" rx="2.5"/></clipPath></defs><g clip-path="url(#avc9)"><rect width="18" height="18" fill="url(#avg9)"/><rect x="12.5" y="9" width="6" height="9" fill="#bccfdc"/><path d="M0 12.5 Q3 12 5.5 13.5 L7 18 H0 Z" fill="#b9a0cf"/><ellipse cx="9.3" cy="10.6" rx="5.2" ry="6.6" fill="#7a573f"/><path d="M4.2 7 Q4.5 2.6 9.4 2.5 Q14.2 2.6 14.4 7 Q12 5 9.4 5.2 Q6.6 5 4.2 7 Z" fill="#2c2520"/><rect x="4.6" y="8.4" width="9.6" height="1.5" rx="0.6" fill="#2a2320"/><ellipse cx="8.4" cy="15.8" rx="4" ry="2.6" fill="#4f3627"/><ellipse cx="11.8" cy="14.8" rx="2.6" ry="2.2" fill="#94694b"/></g></svg>
<div class="t" style="left:700.6px;top:758.26px;font-size:12.5px;line-height:12.5px;color:#1c1c1c;font-weight:700;letter-spacing:-0.3px;">Relecloud</div>
<div class="t" style="left:700.6px;top:777.73px;font-size:11px;line-height:11px;color:#9a9a9a;font-weight:400;">50000</div>
<div class="t" style="left:808.5px;top:766.04px;font-size:13px;line-height:13px;color:#333;font-weight:400;letter-spacing:-0.3px;">Oct 26, 2021</div>
<div style="position:absolute;left:943px;top:762.55px;width:73px;height:19px;background:#ebf5ee;border-radius:4px;"></div>
<div class="t" style="left:950.6px;top:769.47px;font-size:10px;line-height:10px;color:#3f9a5c;font-weight:700;">New Invoice</div>
<div style="position:absolute;left:1256px;top:760.75px;width:35px;height:22px;background:#ebf5ee;border-radius:4px;"></div>
<div class="t" style="left:1263.5px;top:769.05px;font-size:10.5px;line-height:10.5px;color:#3f9a5c;font-weight:700;">22%</div>
<div class="t" style="right:451.79999999999995px;top:766.37px;font-size:12.6px;line-height:12.6px;color:#333;font-weight:400;">$3,382.00</div>
<div class="t" style="left:1483.6px;top:766.37px;font-size:12.6px;line-height:12.6px;color:#333;font-weight:400;">Invoice</div>
<svg style="position:absolute;left:1691px;top:764.85px;" width="12" height="12" viewBox="0 0 12 12"><path d="M5 2.5 H2.2 Q1 2.5 1 3.7 V10 Q1 11.2 2.2 11.2 H8.5 Q9.7 11.2 9.7 10 V7.2" fill="none" stroke="#8d8d8d" stroke-width="1.4"/><path d="M6 1 H11 V6 M11 1 L5.5 6.5" fill="none" stroke="#8d8d8d" stroke-width="1.4"/></svg>
<div style="position:absolute;left:1389.5px;top:240px;width:325px;height:404px;background:#fafafe;box-shadow:0 2px 4px rgba(0,0,0,0.25), 0 0 2px rgba(0,0,0,0.15);"></div>
<div style="position:absolute;left:1705px;top:240px;width:9.5px;height:404px;background:#ececf0;"></div>
<div style="position:absolute;left:1706px;top:241px;width:7.5px;height:213px;background:#d2d2d4;border-radius:4px;"></div>
<svg style="position:absolute;left:1410px;top:256.5px;overflow:visible;" width="18" height="18" viewBox="0 0 18 18"><path d="M4.4 0.6 H14.7 L17.8 4.6 H1.3 Z M9.5 0.6 V4.6" fill="none" stroke="#b3b4b9" stroke-width="1.2" stroke-linejoin="round"/><rect x="1.1" y="4.4" width="16.9" height="12.6" fill="#b3b4b9"/></svg>
<div class="t" style="left:1446.6px;top:258.84px;font-size:13.3px;line-height:13.3px;color:#b4b4ba;font-weight:400;">Allocate inventory</div>
<svg style="position:absolute;left:1659.5px;top:257.3px;" width="15" height="18" viewBox="0 0 15 18"><path d="M2.1 1.2 H12.9" stroke="#b3b4b9" stroke-width="1.5"/><path d="M4.4 1.6 V5.4 Q4.3 7.9 1.3 9.8 H13.7 Q10.7 7.9 10.6 5.4 V1.6" fill="none" stroke="#b3b4b9" stroke-width="1.5" stroke-linejoin="round"/><path d="M7.5 10 V17.4" stroke="#b3b4b9" stroke-width="1.6"/></svg>
<svg style="position:absolute;left:1410px;top:306.77px;overflow:visible;" width="18" height="18" viewBox="0 0 18 18"><path d="M4.4 0.6 H14.7 L17.8 4.6 H1.3 Z M9.5 0.6 V4.6" fill="none" stroke="#b3b4b9" stroke-width="1.2" stroke-linejoin="round"/><rect x="1.1" y="4.4" width="16.9" height="12.6" fill="#b3b4b9"/><path d="M7 8.8 L12.2 14 M12.2 8.8 L7 14" stroke="#fafafe" stroke-width="1.2"/></svg>
<div class="t" style="left:1446.6px;top:309.11px;font-size:13.3px;line-height:13.3px;color:#b4b4ba;font-weight:400;">Cancel allocations</div>
<svg style="position:absolute;left:1659.5px;top:307.57px;" width="15" height="18" viewBox="0 0 15 18"><path d="M2.1 1.2 H12.9" stroke="#b3b4b9" stroke-width="1.5"/><path d="M4.4 1.6 V5.4 Q4.3 7.9 1.3 9.8 H13.7 Q10.7 7.9 10.6 5.4 V1.6" fill="none" stroke="#b3b4b9" stroke-width="1.5" stroke-linejoin="round"/><path d="M7.5 10 V17.4" stroke="#b3b4b9" stroke-width="1.6"/></svg>
<svg style="position:absolute;left:1410px;top:357.04px;overflow:visible;" width="18" height="18" viewBox="0 0 18 18"><path d="M2 4.2 H16 M6.5 3.2 H11.5" stroke="#3a3d44" stroke-width="1.8"/><path d="M3.8 5 V15.5 Q3.8 17 5.3 17 H12.7 Q14.2 17 14.2 15.5 V5" fill="none" stroke="#3a3d44" stroke-width="1.7"/><path d="M7.2 7.6 V14.2 M10.8 7.6 V14.2" stroke="#3a3d44" stroke-width="1.6"/></svg>
<div class="t" style="left:1446.6px;top:359.38px;font-size:13.3px;line-height:13.3px;color:#222;font-weight:400;">Delete Documents</div>
<svg style="position:absolute;left:1659.5px;top:357.84px;" width="15" height="18" viewBox="0 0 15 18"><path d="M2.1 1.2 H12.9" stroke="#b3b4b9" stroke-width="1.5"/><path d="M4.4 1.6 V5.4 Q4.3 7.9 1.3 9.8 H13.7 Q10.7 7.9 10.6 5.4 V1.6" fill="none" stroke="#b3b4b9" stroke-width="1.5" stroke-linejoin="round"/><path d="M7.5 10 V17.4" stroke="#b3b4b9" stroke-width="1.6"/></svg>
<svg style="position:absolute;left:1410px;top:407.31px;overflow:visible;" width="18" height="18" viewBox="0 0 18 18"><rect x="1" y="3.2" width="16.1" height="12.6" rx="1.6" fill="none" stroke="#b3b4b9" stroke-width="1.6"/><path d="M1.4 4 L9 9.6 L16.7 4" fill="none" stroke="#b3b4b9" stroke-width="1.6"/></svg>
<div class="t" style="left:1446.6px;top:409.65px;font-size:13.3px;line-height:13.3px;color:#b4b4ba;font-weight:400;">Email</div>
<svg style="position:absolute;left:1659.5px;top:408.11px;" width="15" height="18" viewBox="0 0 15 18"><path d="M2.1 1.2 H12.9" stroke="#b3b4b9" stroke-width="1.5"/><path d="M4.4 1.6 V5.4 Q4.3 7.9 1.3 9.8 H13.7 Q10.7 7.9 10.6 5.4 V1.6" fill="none" stroke="#b3b4b9" stroke-width="1.5" stroke-linejoin="round"/><path d="M7.5 10 V17.4" stroke="#b3b4b9" stroke-width="1.6"/></svg>
<svg style="position:absolute;left:1410px;top:457.58px;overflow:visible;" width="18" height="18" viewBox="0 0 18 18"><path d="M-0.6 2.8 Q1.8 3.2 2.6 5 L6.9 14.1 L18.7 10.9" fill="none" stroke="#b3b4b9" stroke-width="1.6" stroke-linecap="round" stroke-linejoin="round"/><circle cx="6.9" cy="17" r="1.7" fill="none" stroke="#b3b4b9" stroke-width="1.3"/><path d="M5.6 2.5 L8.3 1.6 L9.6 4.6 L11.4 4 L10.6 0.8 L14 -0.4 L17.3 8 L8.5 10.9 Z" fill="#b3b4b9"/></svg>
<div class="t" style="left:1446.6px;top:459.92px;font-size:13.3px;line-height:13.3px;color:#b4b4ba;font-weight:400;">Generate picks</div>
<svg style="position:absolute;left:1659.5px;top:458.38px;" width="15" height="18" viewBox="0 0 15 18"><path d="M2.1 1.2 H12.9" stroke="#b3b4b9" stroke-width="1.5"/><path d="M4.4 1.6 V5.4 Q4.3 7.9 1.3 9.8 H13.7 Q10.7 7.9 10.6 5.4 V1.6" fill="none" stroke="#b3b4b9" stroke-width="1.5" stroke-linejoin="round"/><path d="M7.5 10 V17.4" stroke="#b3b4b9" stroke-width="1.6"/></svg>
<svg style="position:absolute;left:1410px;top:507.85px;overflow:visible;" width="18" height="18" viewBox="0 0 18 18"><path d="M0.3 1.6 H1.6 Q2.4 1.6 2.8 2.6 L6.3 9.3 H14.4 L17.6 3.5 H3.1" fill="none" stroke="#b3b4b9" stroke-width="1.6" stroke-linejoin="round" stroke-linecap="round"/><path d="M6.3 9.3 L5 11.2 Q4.5 13.1 6 13.1 H16" fill="none" stroke="#b3b4b9" stroke-width="1.6" stroke-linecap="round"/><circle cx="5.4" cy="16.7" r="1.5" fill="#b3b4b9"/><circle cx="14.4" cy="16.7" r="1.5" fill="#b3b4b9"/></svg>
<div class="t" style="left:1446.6px;top:510.19px;font-size:13.3px;line-height:13.3px;color:#b4b4ba;font-weight:400;">Generate purchase orders</div>
<svg style="position:absolute;left:1659.5px;top:508.65px;" width="15" height="18" viewBox="0 0 15 18"><path d="M2.1 1.2 H12.9" stroke="#b3b4b9" stroke-width="1.5"/><path d="M4.4 1.6 V5.4 Q4.3 7.9 1.3 9.8 H13.7 Q10.7 7.9 10.6 5.4 V1.6" fill="none" stroke="#b3b4b9" stroke-width="1.5" stroke-linejoin="round"/><path d="M7.5 10 V17.4" stroke="#b3b4b9" stroke-width="1.6"/></svg>
<svg style="position:absolute;left:1410px;top:558.12px;overflow:visible;" width="18" height="18" viewBox="0 0 18 18"><path d="M1.5 9 H16 M10 3 L16 9 L10 15" fill="none" stroke="#b3b4b9" stroke-width="1.6"/></svg>
<div class="t" style="left:1446.6px;top:560.46px;font-size:13.3px;line-height:13.3px;color:#b4b4ba;font-weight:400;">Move documents</div>
<svg style="position:absolute;left:1659.5px;top:558.92px;" width="15" height="18" viewBox="0 0 15 18"><path d="M2.1 1.2 H12.9" stroke="#b3b4b9" stroke-width="1.5"/><path d="M4.4 1.6 V5.4 Q4.3 7.9 1.3 9.8 H13.7 Q10.7 7.9 10.6 5.4 V1.6" fill="none" stroke="#b3b4b9" stroke-width="1.5" stroke-linejoin="round"/><path d="M7.5 10 V17.4" stroke="#b3b4b9" stroke-width="1.6"/></svg>
<svg style="position:absolute;left:1410px;top:608.39px;overflow:visible;" width="18" height="18" viewBox="0 0 18 18"><path d="M2.8 2.8 H10 L15.4 7.3 V17.2 H2.8 Z" fill="none" stroke="#b3b4b9" stroke-width="1.6" stroke-linejoin="round"/><path d="M11.1 8.6 Q10.6 7.6 9.1 7.6 Q7.1 7.6 7.1 9.3 Q7.1 10.6 9.1 10.9 Q11.3 11.3 11.3 12.8 Q11.3 14.5 9.1 14.5 Q7.4 14.5 6.9 13.4 M9.1 6.3 V7.6 M9.1 14.5 V15.8" fill="none" stroke="#b3b4b9" stroke-width="1.4"/></svg>
<div class="t" style="left:1446.6px;top:610.73px;font-size:13.3px;line-height:13.3px;color:#b4b4ba;font-weight:400;">Post invoices</div>
<svg style="position:absolute;left:1659.5px;top:609.19px;" width="15" height="18" viewBox="0 0 15 18"><path d="M2.1 1.2 H12.9" stroke="#b3b4b9" stroke-width="1.5"/><path d="M4.4 1.6 V5.4 Q4.3 7.9 1.3 9.8 H13.7 Q10.7 7.9 10.6 5.4 V1.6" fill="none" stroke="#b3b4b9" stroke-width="1.5" stroke-linejoin="round"/><path d="M7.5 10 V17.4" stroke="#b3b4b9" stroke-width="1.6"/></svg>
<div class="t" style="left:437px;top:813.42px;font-size:12.5px;line-height:12.5px;color:#2b2b2b;font-weight:400;-webkit-text-stroke:0.2px #2b2b2b;">41 Documents</div>
<div class="t" style="right:115px;top:812.50px;font-size:12.4px;line-height:12.4px;color:#2b2b2b;font-weight:400;">$32,576.13</div>
<div class="t" style="left:444.4px;top:866.49px;font-size:11px;line-height:11px;color:#9a9a9a;font-weight:400;">Rows per page:</div>
<div class="t" style="left:544.7px;top:865.62px;font-size:12.5px;line-height:12.5px;color:#333;font-weight:400;">10</div>
<svg style="position:absolute;left:564px;top:869px;" width="11" height="6" viewBox="0 0 11 6"><path d="M1 0.5 H10 L5.5 5.5 Z" fill="#666"/></svg>
<div class="t" style="left:1527px;top:866.69px;font-size:11px;line-height:11px;color:#9a9a9a;font-weight:400;">1-10 of 41</div>
<svg style="position:absolute;left:1629px;top:865px;" width="11" height="13" viewBox="0 0 11 13"><path d="M8 1.5 L3 6.5 L8 11.5" fill="none" stroke="#b0b0b0" stroke-width="1.5"/></svg>
<div style="position:absolute;left:1656px;top:856px;width:21px;height:33px;background:#0033c4;border-radius:4px;"></div>
<div class="t" style="left:1666.5px;top:865.00px;font-size:13px;line-height:13px;color:#fff;font-weight:700;transform:translateX(-50%);">1</div>
<div class="t" style="left:1684.0px;top:865.00px;font-size:13px;line-height:13px;color:#2b2b2b;font-weight:400;">2</div>
<div class="t" style="left:1706.35px;top:865.00px;font-size:13px;line-height:13px;color:#2b2b2b;font-weight:400;">3</div>
<div class="t" style="left:1728.7px;top:865.00px;font-size:13px;line-height:13px;color:#2b2b2b;font-weight:400;">4</div>
<div class="t" style="left:1751.05px;top:865.00px;font-size:13px;line-height:13px;color:#2b2b2b;font-weight:400;">5</div>
<svg style="position:absolute;left:1781px;top:865px;" width="11" height="13" viewBox="0 0 11 13"><path d="M3 1.5 L8 6.5 L3 11.5" fill="none" stroke="#444" stroke-width="1.5"/></svg>
<div style="position:absolute;left:18px;top:886px;width:36px;height:36px;background:#0437c2;border-radius:50%;"></div>
<div class="t" style="left:27.6px;top:895.30px;font-size:15px;line-height:15px;color:#fff;font-weight:400;">FF</div>
<svg style="position:absolute;left:1075.2px;top:445.6px;" width="16" height="22" viewBox="0 0 16.8 23.1"><path d="M1.5 1.2 V16.8 L5.2 13.3 L8 19.6 Q8.5 20.6 9.5 20.2 L10.6 19.7 Q11.5 19.2 11.1 18.3 L8.4 12.4 H13.4 Z" fill="#fff" stroke="#111" stroke-width="1.1" stroke-linejoin="round"/></svg>

</body></html>
